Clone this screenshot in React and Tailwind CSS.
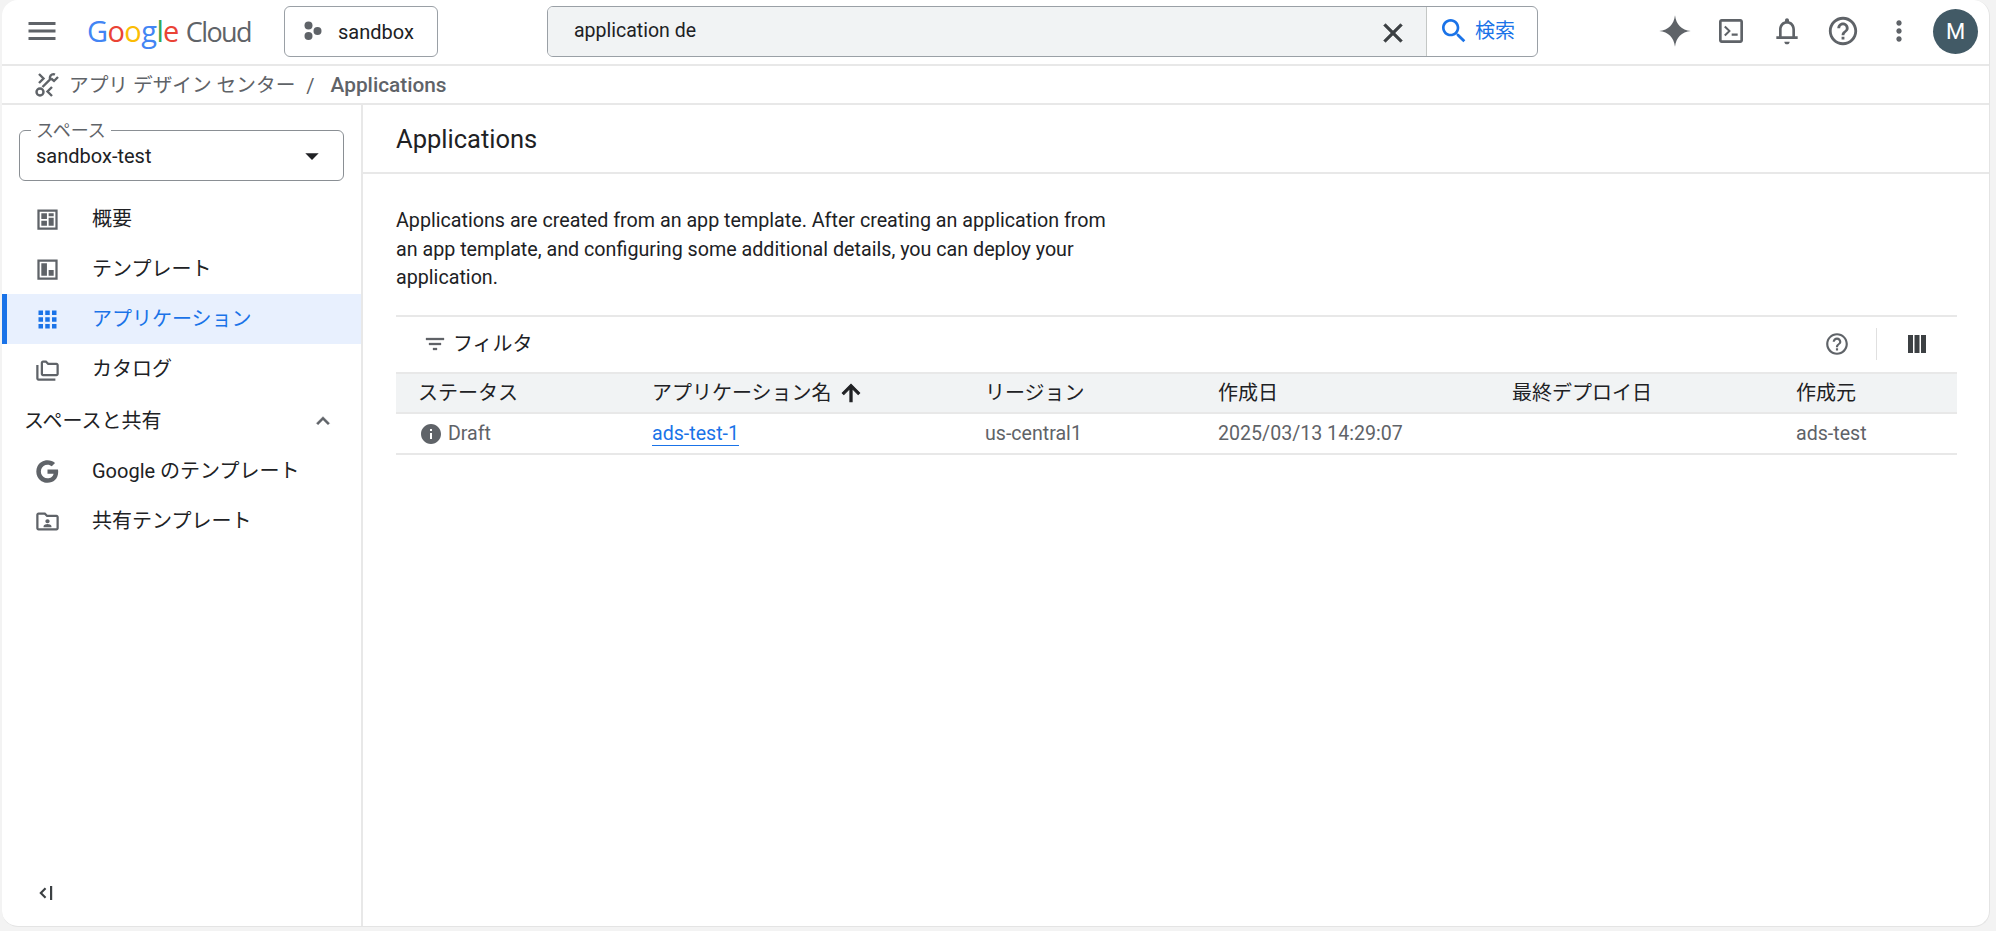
import React from "react";

const P = {
  menu: "M3 18h18v-2H3v2zm0-5h18v-2H3v2zm0-7v2h18V6H3z",
  close: "M19 6.41L17.59 5 12 10.59 6.41 5 5 6.41 10.59 12 5 17.59 6.41 19 12 13.41 17.59 19 19 17.59 13.41 12z",
  search: "M15.5 14h-.79l-.28-.27C15.41 12.59 16 11.11 16 9.5 16 5.91 13.09 3 9.5 3S3 5.91 3 9.5 5.91 16 9.5 16c1.61 0 3.09-.59 4.23-1.57l.27.28v.79l5 4.99L20.49 19l-4.99-5zm-6 0C7.01 14 5 11.99 5 9.5S7.01 5 9.5 5 14 7.01 14 9.5 11.99 14 9.5 14z",
  help: "M11 18h2v-2h-2v2zm1-16C6.48 2 2 6.48 2 12s4.48 10 10 10 10-4.48 10-10S17.52 2 12 2zm0 18c-4.41 0-8-3.59-8-8s3.59-8 8-8 8 3.59 8 8-3.59 8-8 8zm0-14c-2.21 0-4 1.79-4 4h2c0-1.1.9-2 2-2s2 .9 2 2c0 2-3 1.75-3 5h2c0-2.25 3-2.5 3-5 0-2.21-1.79-4-4-4z",
  more: "M12 8c1.1 0 2-.9 2-2s-.9-2-2-2-2 .9-2 2 .9 2 2 2zm0 2c-1.1 0-2 .9-2 2s.9 2 2 2 2-.9 2-2-.9-2-2-2zm0 6c-1.1 0-2 .9-2 2s.9 2 2 2 2-.9 2-2-.9-2-2-2z",
  bell: "M12 22c1.1 0 2-.9 2-2h-4c0 1.1.9 2 2 2zm6-6v-5c0-3.07-1.63-5.64-4.5-6.32V4c0-.83-.67-1.5-1.5-1.5s-1.5.67-1.5 1.5v.68C7.64 5.36 6 7.92 6 11v5H4v2h16v-2h-2zm-2 0H8v-5c0-2.48 1.51-4.5 4-4.5s4 2.02 4 4.5v5z",
  info: "M12 2C6.48 2 2 6.48 2 12s4.48 10 10 10 10-4.48 10-10S17.52 2 12 2zm1 15h-2v-6h2v6zm0-8h-2V7h2v2z",
  filter: "M10 18h4v-2h-4v2zM3 6v2h18V6H3zm3 7h12v-2H6v2z",
  up: "M4 12l1.41 1.41L11 7.83V20h2V7.83l5.58 5.59L20 12l-8-8-8 8z",
  drop: "M7 10l5 5 5-5z",
  less: "M12 8l-6 6 1.41 1.41L12 10.83l4.59 4.58L18 14z",
  apps: "M4 8h4V4H4v4zm6 12h4v-4h-4v4zm-6 0h4v-4H4v4zm0-6h4v-4H4v4zm6 0h4v-4h-4v4zm6-10v4h4V4h-4zm-6 4h4V4h-4v4zm6 6h4v-4h-4v4zm0 6h4v-4h-4v4z",
  spark: "M12 1.5C12.7 7.6 16.4 11.3 22.5 12 16.4 12.7 12.7 16.4 12 22.5 11.3 16.4 7.6 12.7 1.5 12 7.6 11.3 11.3 7.6 12 1.5z",
  terminal: "M5 3h14c1.100 0 2 .9 2 2v14c0 1.100-.9 2-2 2H5c-1.100 0-2-.9-2-2V5c0-1.100.9-2 2-2zm0 2v14h14V5H5zm1.800 4.200l3 2.800-3 2.800 1.100 1.100 4-3.900-4-3.900-1.100 1.100zM12.500 15.500h4.500v-1.600h-4.500v1.600z",
  overview: "M3 3h18v18H3V3zm2 2v14h14V5H5zm1.5 1.5h5v5h-5v-5zm6.500 0h4.500V9H13V6.500zm0 4h4.500v7H13v-7zm-6.500 2.500h5v4.500h-5V13z",
  template: "M3 3h18v18H3V3zm2 2v14h14V5H5zm1.500 1.500h5v11h-5v-11zm6.500 6h4.500v5H13v-5z",
  catalog: "M4 8H2v12c0 1.100.9 2 2 2h15v-2H4V8zm16-2h-7l-2-2H8c-1.100 0-2 .9-2 2v10c0 1.100.9 2 2 2h12c1.100 0 2-.9 2-2V8c0-1.100-.9-2-2-2zm0 10H8V6h2.200l2 2H20v8z",
  shared: "M20 6h-8l-2-2H4c-1.100 0-2 .9-2 2v12c0 1.100.9 2 2 2h16c1.100 0 2-.9 2-2V8c0-1.100-.9-2-2-2zm0 12H4V6h5.200l2 2H20v10zM12 13.500c1.100 0 1.900-.8 1.900-1.800S13.100 10 12 10s-1.900.8-1.900 1.700.8 1.800 1.900 1.800zM8.500 17h7v-.9c0-1.200-2.300-1.800-3.500-1.800s-3.500.6-3.500 1.800v.9z",
  google: "M21.500 12.200c0-.7-.1-1.400-.2-2H12v3.900h5.400c-.2 1.200-.9 2.300-2 3v2.500h3.200c1.900-1.700 2.900-4.300 2.900-7.400zM12 22c2.700 0 5-.9 6.600-2.400l-3.200-2.500c-.9.6-2 1-3.400 1-2.600 0-4.800-1.800-5.600-4.100H3.100v2.600C4.700 19.800 8.100 22 12 22zM6.400 14c-.4-1.300-.4-2.700 0-4V7.400H3.100c-1.400 2.700-1.400 6.500 0 9.200L6.400 14zM12 5.900c1.500 0 2.800.5 3.800 1.500l2.900-2.900C16.900 2.900 14.700 2 12 2 8.100 2 4.700 4.200 3.100 7.400L6.400 10c.8-2.300 3-4.100 5.600-4.100z",
  collapse: "M15 5v14h2.200V5H15zM9.800 6.500L4.300 12l5.500 5.500 1.500-1.500-4-4 4-4-1.500-1.500z",
};

function I({ d, s = 24, c = "text-[#5f6368]" }) {
  return (
    <svg viewBox="0 0 24 24" width={s} height={s} className={`${c} shrink-0 fill-current`}>
      <path d={d} />
    </svg>
  );
}

function Nav({ d, label, active, size = 27 }) {
  return (
    <div
      className={`flex h-[50px] items-center border-l-[5px] pl-[28px] ${
        active ? "border-[#1a73e8] bg-[#e8f0fe]" : "border-transparent"
      }`}
    >
      <div className="flex w-[24px] items-center justify-center">
        {d === "apps" ? <I d={P.apps} s={size} c="text-[#1a73e8]" /> : <I d={P[d]} s={size} />}
      </div>
      <span className={`ml-[33px] text-[20px] ${active ? "text-[#1a73e8]" : "text-[#202124]"}`}>{label}</span>
    </div>
  );
}

const cols = "grid grid-cols-[234px_333px_233px_294px_284px_1fr] items-center pl-[22px]";

export default function App() {
  return (
    <div className="h-[931px] w-[1996px] overflow-hidden bg-[#f3f3f3] pl-[2px] pr-[6px] pb-[4px] font-[Roboto,'Noto_Sans_CJK_JP',sans-serif]">
      <div className="flex h-full flex-col overflow-hidden rounded-[16px] border-r border-b border-[#e4e4e4] bg-white">
        {/* header */}
        <header className="flex h-[66px] shrink-0 items-center border-b-2 border-[#e8e8e8] pb-[5px] pt-[3px]">
          <div className="ml-[24px] flex w-[32px] items-center justify-center">
            <I d={P.menu} s={36} />
          </div>
          <div className="ml-[29px] flex w-[167px] items-baseline font-['Open_Sans'] tracking-[-0.6px]">
            <span className="text-[29px] text-[#4285f4]">G</span>
            <span className="text-[29px] text-[#ea4335]">o</span>
            <span className="text-[29px] text-[#fbbc04]">o</span>
            <span className="text-[29px] text-[#4285f4]">g</span>
            <span className="text-[29px] text-[#34a853]">l</span>
            <span className="text-[29px] text-[#ea4335]">e</span>
            <span className="ml-[7px] text-[27px] tracking-[-1.600px] text-[#5f6368]">Cloud</span>
          </div>
          <div className="ml-[30px] flex h-[51px] w-[154px] items-center rounded-[6px] border border-[#9aa0a6] pl-[18px]">
            <svg viewBox="0 0 20 20" width="20" height="20" className="shrink-0 fill-[#5f6368]">
              <circle cx="5.500" cy="4.500" r="4" />
              <circle cx="5.500" cy="15" r="4" />
              <circle cx="14.500" cy="10" r="4" />
            </svg>
            <span className="ml-[15px] pt-[1px] text-[20px] text-[#202124]">sandbox</span>
          </div>
          <div className="ml-[109px] flex h-[51px] w-[991px] items-stretch overflow-hidden rounded-[6px] border border-[#9aa0a6]">
            <div className="flex flex-1 items-center bg-[#f1f3f4] pl-[26px] pr-[17px]">
              <span className="flex-1 text-[19.500px] text-[#202124]">application de</span>
              <I d={P.close} s={32} c="mt-[4px] stroke-current stroke-[0.500] text-[#3c4043]" />
            </div>
            <div className="flex w-[111px] items-center border-l border-[#c4c7c5] pl-[11px]">
              <I d={P.search} s={32} c="text-[#1a73e8]" />
              <span className="ml-[5px] text-[20px] text-[#1a73e8]">検索</span>
            </div>
          </div>
          <div className="ml-[109px] flex w-[56px] justify-center">
            <I d={P.spark} s={36} />
          </div>
          <div className="flex w-[56px] justify-center">
            <I d={P.terminal} s={32} />
          </div>
          <div className="flex w-[56px] justify-center">
            <I d={P.bell} s={32} />
          </div>
          <div className="flex w-[56px] justify-center">
            <I d={P.help} s={34} />
          </div>
          <div className="flex w-[56px] justify-center">
            <I d={P.more} s={32} />
          </div>
          <div className="ml-[6px] flex h-[45px] w-[45px] items-center justify-center rounded-full bg-[#425a66] text-[22px] text-white">
            M
          </div>
        </header>

        {/* breadcrumb */}
        <div className="flex h-[39px] shrink-0 items-center border-b-2 border-[#e8e8e8] pl-[32px] pt-[1px] text-[20px] text-[#5f6368]">
          <svg viewBox="0 0 26 26" width="26" height="26" className="shrink-0 fill-none stroke-[#5f6368] stroke-[2.400]">
            <path d="M5 2l4.500 4.500L5 11" />
            <path d="M21 2.500c-2-.8-4.500 0-5 2.500-.2 1 .1 2-.1 2.500L8.500 15" />
            <circle cx="6" cy="20" r="3.500" />
            <path d="M18 15l-4.500 4.500L18 24" />
            <path d="M17 6.500l3 2.500 4-4" />
          </svg>
          <span className="ml-[9px] pt-[2px] text-[19.700px]">アプリ デザイン センター</span>
          <span className="ml-[11px] pt-[2px]">/</span>
          <span className="ml-[16px] pt-[2px] text-[20.800px] font-medium">Applications</span>
        </div>

        {/* body */}
        <div className="flex min-h-0 flex-1">
          <aside className="flex w-[361px] shrink-0 flex-col border-r-2 border-[#e8e8e8]">
            <div className="relative mx-[17px] mt-[25px] mb-[13px] flex h-[51px] w-[325px] items-center rounded-[6px] border border-[#8a8f94] pl-[16px] pr-[15px] pt-[1px]">
              <span className="absolute -top-[10px] left-[11px] bg-white px-[5px] text-[18px] leading-[20px] text-[#5f6368]">
                スペース
              </span>
              <span className="flex-1 text-[20px] text-[#202124]">sandbox-test</span>
              <I d={P.drop} s={32} c="text-[#202124]" />
            </div>
            <Nav d="overview" label="概要" />
            <Nav d="template" label="テンプレート" />
            <Nav d="apps" label="アプリケーション" active />
            <Nav d="catalog" label="カタログ" />
            <div className="flex h-[52px] items-center justify-between pl-[22px] pr-[25px] pt-[1px] text-[20px] text-[#202124]">
              <span>スペースと共有</span>
              <I d={P.less} s={26} c="stroke-current stroke-[0.500] text-[#5f6368]" />
            </div>
            <Nav d="google" label="Google のテンプレート" />
            <Nav d="shared" label="共有テンプレート" />
            <div className="mt-auto flex h-[46px] items-start pl-[33px] pt-[1px]">
              <I d={P.collapse} s={24} c="text-[#3c4043]" />
            </div>
          </aside>

          <main className="min-w-0 flex-1">
            <div className="flex h-[69px] items-center border-b-2 border-[#e8e8e8] pl-[33px] pt-[1px] text-[25.500px] text-[#202124]">
              Applications
            </div>
            <div className="pl-[33px] pr-[32px]">
              <p className="mt-[33px] w-[725px] text-[19.700px] leading-[28.500px] text-[#202124]">
                Applications are created from an app template. After creating an application from an app template, and configuring some additional details, you can deploy your application.
              </p>
              <div className="mt-[22px] flex h-[57px] items-center border-t-2 border-[#e8e8e8] pl-[27px] pr-[31px] text-[#202124]">
                <I d={P.filter} s={24} c="stroke-current stroke-[0.300] text-[#5f6368]" />
                <span className="ml-[6px] flex-1 text-[20px]">フィルタ</span>
                <I d={P.help} s={26} />
                <div className="ml-[26px] mr-[31px] h-[32px] w-px bg-[#e0e0e0]" />
                <svg viewBox="0 0 18 18" width="18" height="18" className="fill-[#3c4043]">
                  <rect x="0" y="0" width="5" height="18" />
                  <rect x="6.500" y="0" width="5" height="18" />
                  <rect x="13" y="0" width="5" height="18" />
                </svg>
              </div>
              <div className={`${cols} h-[42px] border-y-2 border-[#e8e8e8] bg-[#f1f3f4] text-[20px] text-[#202124]`}>
                <span>ステータス</span>
                <span className="flex items-center">
                  アプリケーション名
                  <I d={P.up} s={26} c="ml-[6px] stroke-current stroke-[1] text-[#202124]" />
                </span>
                <span>リージョン</span>
                <span>作成日</span>
                <span>最終デプロイ日</span>
                <span>作成元</span>
              </div>
              <div className={`${cols} h-[41px] border-b-2 border-[#e8e8e8] pt-[2px] text-[19.600px] text-[#5f6368]`}>
                <span className="flex items-center">
                  <I d={P.info} s={24} c="ml-[1px] text-[#5f6368]" />
                  <span className="ml-[5px]">Draft</span>
                </span>
                <span>
                  <span className="border-b border-[#1a73e8] text-[#1a73e8]">ads-test-1</span>
                </span>
                <span>us-central1</span>
                <span>2025/03/13 14:29:07</span>
                <span />
                <span>ads-test</span>
              </div>
            </div>
          </main>
        </div>
      </div>
    </div>
  );
}
